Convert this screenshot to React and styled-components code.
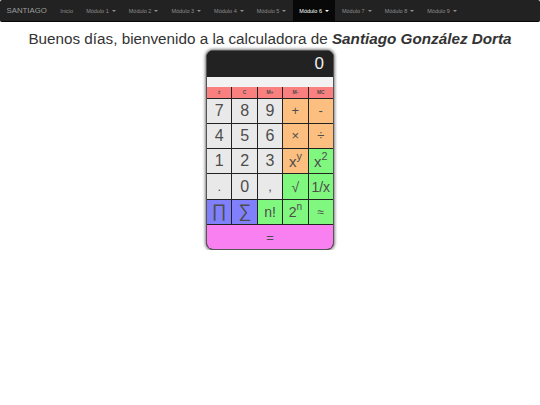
import React from "react";
import styled, { createGlobalStyle } from "styled-components";

const GlobalStyle = createGlobalStyle`
  html, body { margin: 0; padding: 0; background: #fff; }
  body { font-family: "Liberation Sans", Arial, sans-serif; color: #333; }
`;

const Navbar = styled.nav`
  display: flex;
  align-items: stretch;
  height: 22px;
  background: #222;
  border-bottom: 1px solid #080808;
  border-radius: 2px;
  box-sizing: border-box;
  padding-left: 6.5px;
`;
const Brand = styled.a`
  display: flex;
  align-items: center;
  font-size: 7.8px;
  color: #9d9d9d;
  margin-right: 7px;
`;
const NavItem = styled.a`
  display: flex;
  align-items: center;
  gap: 3px;
  padding: 0 6.5px;
  font-size: 5.5px;
  color: ${(p) => (p.$active ? "#fff" : "#8f8f8f")};
  background: ${(p) => (p.$active ? "#080808" : "transparent")};
`;
const Caret = styled.span`
  width: 0;
  height: 0;
  border-top: 2px solid currentColor;
  border-left: 2px solid transparent;
  border-right: 2px solid transparent;
`;
const Heading = styled.h1`
  margin: 8px 0 2px;
  text-align: center;
  font-size: 15.25px;
  line-height: 18px;
  font-weight: 400;
  color: #333;
  em { font-weight: 700; font-style: italic; }
`;
const Calculator = styled.div`
  width: 128px;
  margin: 0 auto;
  box-sizing: border-box;
  background: #000;
  border: 1px solid #555;
  border-radius: 7px;
  box-shadow: 0 0 3px 1px rgba(0, 0, 0, 0.5);
  overflow: hidden;
`;
const Screen = styled.div`
  height: 26px;
  background: #222;
  color: #eee;
  font-size: 17px;
  line-height: 26px;
  text-align: right;
  padding-right: 9px;
`;
const Memory = styled.div`
  height: 10px;
  background: #f2f2f2;
`;
const Keys = styled.div`
  display: grid;
  grid-template-columns: repeat(5, 1fr);
  grid-auto-rows: 24.3px;
  gap: 1px;
  background: #222;
`;
const Key = styled.div`
  display: flex;
  align-items: center;
  justify-content: center;
  font-size: ${(p) => p.$size || 16}px;
  color: #4d4d4d;
  background: ${(p) => p.$bg};
  grid-column: ${(p) => (p.$wide ? "1 / -1" : "auto")};
  sup { font-size: 0.72em; line-height: 0; position: relative; top: -5px; }
`;
const TopKey = styled(Key)`
  height: 10.5px;
  font-size: 5px;
  font-weight: 700;
`;
const TopRow = styled(Keys)`
  grid-auto-rows: 10.5px;
  padding-bottom: 1px;
`;

const GREY = "#e9e9e9";
const ORANGE = "#fcbf80";
const GREEN = "#80f880";
const BLUE = "#8080fc";
const PINK = "#f880f0";
const RED = "#fa8080";

const topKeys = ["±", "C", "M+", "M-", "MC"];
const keys = [
  ["7", GREY], ["8", GREY], ["9", GREY], ["+", ORANGE, 13], ["-", ORANGE, 13],
  ["4", GREY], ["5", GREY], ["6", GREY], ["×", ORANGE, 13], ["÷", ORANGE, 13],
  ["1", GREY], ["2", GREY], ["3", GREY], [<>x<sup>y</sup></>, ORANGE, 15], [<>x<sup>2</sup></>, GREEN, 15],
  [".", GREY, 13], ["0", GREY], [",", GREY, 13], ["√", GREEN, 14], ["1/x", GREEN, 14],
  ["∏", BLUE, 18], ["∑", BLUE, 18], ["n!", GREEN, 14], [<>2<sup>n</sup></>, GREEN, 14], ["≈", GREEN, 12],
];
const modules = [1, 2, 3, 4, 5, 6, 7, 8, 9];

export default function App() {
  return (
    <>
      <GlobalStyle />
      <Navbar>
        <Brand>SANTIAGO</Brand>
        <NavItem>Inicio</NavItem>
        {modules.map((n) => (
          <NavItem key={n} $active={n === 6}>
            Módulo {n} <Caret />
          </NavItem>
        ))}
      </Navbar>
      <Heading>
        Buenos días, bienvenido a la calculadora de <em>Santiago González Dorta</em>
      </Heading>
      <Calculator>
        <Screen>0</Screen>
        <Memory />
        <TopRow>
          {topKeys.map((k) => (
            <TopKey key={k} $bg={RED}>{k}</TopKey>
          ))}
        </TopRow>
        <Keys>
          {keys.map(([label, bg, size], i) => (
            <Key key={i} $bg={bg} $size={size}>{label}</Key>
          ))}
          <Key $bg={PINK} $wide $size={13}>=</Key>
        </Keys>
      </Calculator>
    </>
  );
}
